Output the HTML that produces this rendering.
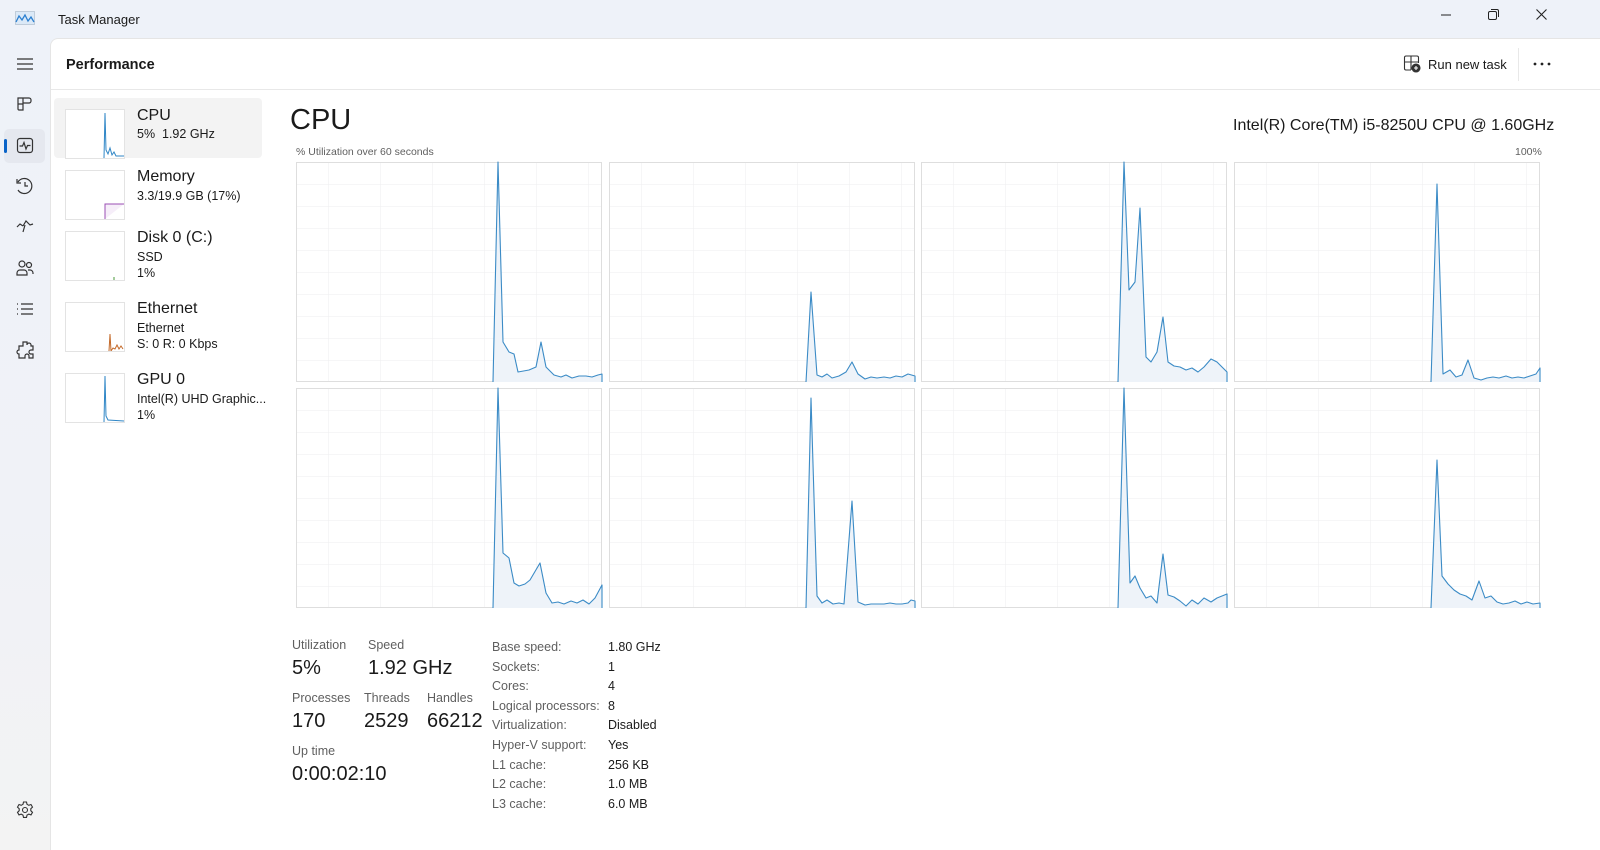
<!DOCTYPE html>
<html><head><meta charset="utf-8"><style>
*{margin:0;padding:0;box-sizing:border-box}
body{width:1600px;height:850px;overflow:hidden;font-family:"Liberation Sans",sans-serif;background:linear-gradient(#eef2f9 0%,#f0f2f7 60%,#f3f3f3 100%);position:relative;color:#1a1a1a}
.abs{position:absolute}
.main{position:absolute;left:50px;top:38px;width:1550px;height:812px;background:#fff;border-top-left-radius:8px;border-left:1px solid #e5e5e5;border-top:1px solid #e5e5e5}
.t{position:absolute;white-space:nowrap}
.lbl{color:#5f5f5f;font-size:12.5px}
.big{font-size:20px;color:#1a1a1a}
.kv{font-size:12.5px}
.mini{position:absolute;left:65px;width:60px;height:50px;border:1px solid #e3e3e3;background:#fff}
</style></head><body>
<svg class="abs" style="left:15px;top:11px" width="20" height="14" viewBox="0 0 20 14"><rect x="0.5" y="0.5" width="19" height="13" fill="#dbe9f7" stroke="#9ab" stroke-width="0.5"/><polyline points="1,11 4,5 7,9 10,4 13,10 16,6 19,11" fill="none" stroke="#2a7fd0" stroke-width="1.3"/></svg>
<div class="t" style="left:58px;top:12px;font-size:13px">Task Manager</div>
<svg class="abs" style="left:1440px;top:9px" width="12" height="12"><line x1="1" y1="6" x2="11" y2="6" stroke="#222" stroke-width="1"/></svg>
<svg class="abs" style="left:1487px;top:8px" width="13" height="13"><rect x="1.5" y="3.5" width="8" height="8" rx="1.5" fill="none" stroke="#222"/><path d="M4 1.5h6a1.5 1.5 0 0 1 1.5 1.5v6" fill="none" stroke="#222"/></svg>
<svg class="abs" style="left:1535px;top:8px" width="13" height="13"><path d="M1.5 1.5l10 10M11.5 1.5l-10 10" stroke="#222" stroke-width="1.1"/></svg>

<svg class="abs" style="left:16px;top:57px" width="18" height="14"><path d="M1 2h16M1 7h16M1 12h16" stroke="#333" stroke-width="1.2"/></svg>
<svg class="abs" style="left:16px;top:96px" width="18" height="16" fill="none" stroke="#333" stroke-width="1.2"><path d="M2 2h5v12H3a1 1 0 0 1-1-1zM7 2h6a2 2 0 0 1 2 2v1a2 2 0 0 1-2 2H7M2 8h5"/></svg>
<div class="abs" style="left:4px;top:129px;width:41px;height:34px;background:#e5e8ef;border-radius:5px"></div>
<div class="abs" style="left:4px;top:139px;width:3px;height:14px;background:#0a64c8;border-radius:2px"></div>
<svg class="abs" style="left:16px;top:137px" width="18" height="17" fill="none" stroke="#333" stroke-width="1.2"><rect x="1.5" y="1.5" width="15" height="14" rx="2.5"/><polyline points="3.5,9 6.5,9 8,5.5 10,12 11.5,8.5 14.5,8.5"/></svg>
<svg class="abs" style="left:15px;top:177px" width="20" height="18" fill="none" stroke="#333" stroke-width="1.2"><path d="M3 5A7.5 7.5 0 1 1 3 13"/><path d="M2 2v4h4"/><path d="M10 5v4h3"/></svg>
<svg class="abs" style="left:15px;top:219px" width="20" height="14" fill="none" stroke="#333" stroke-width="1.2"><path d="M2 8l3-3 3 2M8 7l3-5 4 4 3-1M10 6l-2 7"/></svg>
<svg class="abs" style="left:15px;top:259px" width="20" height="18" fill="none" stroke="#333" stroke-width="1.2"><circle cx="7" cy="5" r="3"/><circle cx="14" cy="6" r="2.5"/><path d="M2 16v-2a3 3 0 0 1 3-3h4a3 3 0 0 1 3 3v2zM13 11h2a3 3 0 0 1 3 3v1"/></svg>
<svg class="abs" style="left:15px;top:302px" width="20" height="14" stroke="#333" stroke-width="1.2"><path d="M2 2h1M2 7h1M2 12h1M6 2h12M6 7h12M6 12h12"/></svg>
<svg class="abs" style="left:15px;top:340px" width="20" height="20" fill="none" stroke="#333" stroke-width="1.2"><path d="M8 2h4v3a2 2 0 0 1 4 0v1h2v4h-2a2 2 0 0 0 0 4h2v4h-4v-2a2 2 0 0 0-4 0v2H4v-4a2 2 0 0 1 0-4V6h4z"/></svg>
<svg class="abs" style="left:15px;top:800px" width="20" height="20" fill="none" stroke="#333" stroke-width="1.1"><circle cx="10" cy="10" r="2.5"/><path d="M8.5 2h3l.5 2.3 1.8 1 2.2-.8 1.5 2.6-1.7 1.6v2l1.7 1.6-1.5 2.6-2.2-.8-1.8 1-.5 2.3h-3l-.5-2.3-1.8-1-2.2.8-1.5-2.6 1.7-1.6v-2L2.5 7.1 4 4.5l2.2.8 1.8-1z"/></svg>

<div class="main"></div>
<div class="abs" style="left:51px;top:89px;width:1549px;height:1px;background:#e8e8e8"></div>
<div class="t" style="left:66px;top:57px;font-size:14.5px;font-weight:bold;color:#1a1a1a">Performance</div>
<svg class="abs" style="left:1403px;top:55px" width="18" height="18" fill="none" stroke="#333" stroke-width="1.1"><path d="M8 15H3a1.5 1.5 0 0 1-1.5-1.5v-11A1.5 1.5 0 0 1 3 1h11a1.5 1.5 0 0 1 1.5 1.5V8M1.5 7h14M8 1v14"/><circle cx="13" cy="13" r="4" fill="#333"/><path d="M13 11v4M11 13h4" stroke="#fff"/></svg>
<div class="t" style="left:1428px;top:57px;font-size:13px">Run new task</div>
<div class="abs" style="left:1518px;top:48px;width:1px;height:33px;background:#e8e8e8"></div>
<svg class="abs" style="left:1533px;top:62px" width="18" height="4" fill="#222"><circle cx="2" cy="2" r="1.4"/><circle cx="9" cy="2" r="1.4"/><circle cx="16" cy="2" r="1.4"/></svg>

<div class="abs" style="left:54px;top:98px;width:208px;height:60px;background:#f3f3f3;border-radius:4px"></div>
<div class="mini" style="top:109px"><svg width="58" height="48"><polyline points="38,48 39,3 40,40 42,44 44,38 46,45 48,42 50,46 58,46" fill="none" stroke="#2f86c6" stroke-width="1"/></svg></div>
<div class="t" style="left:137px;top:107px;font-size:16px">CPU</div>
<div class="t" style="left:137px;top:127px;font-size:12.5px">5%&nbsp; 1.92 GHz</div>
<div class="mini" style="top:170px"><svg width="58" height="48"><polyline points="39,48 39,33 58,33" fill="#f6eef9" stroke="#9b4fb4" stroke-width="1"/></svg></div>
<div class="t" style="left:137px;top:168px;font-size:16px">Memory</div>
<div class="t" style="left:137px;top:189px;font-size:12.5px">3.3/19.9 GB (17%)</div>
<div class="mini" style="top:231px"><svg width="58" height="48"><line x1="48" y1="48" x2="48" y2="45" stroke="#4a9a3a"/></svg></div>
<div class="t" style="left:137px;top:229px;font-size:16px">Disk 0 (C:)</div>
<div class="t" style="left:137px;top:250px;font-size:12.5px">SSD</div>
<div class="t" style="left:137px;top:266px;font-size:12.5px">1%</div>
<div class="mini" style="top:302px"><svg width="58" height="48"><polyline points="43,48 44,31 45,48 47,45 49,46 51,42 53,46 55,43 57,46" fill="none" stroke="#c46a2a" stroke-width="1"/></svg></div>
<div class="t" style="left:137px;top:300px;font-size:16px">Ethernet</div>
<div class="t" style="left:137px;top:321px;font-size:12.5px">Ethernet</div>
<div class="t" style="left:137px;top:337px;font-size:12.5px">S: 0 R: 0 Kbps</div>
<div class="mini" style="top:373px"><svg width="58" height="48"><polyline points="38,48 39,2 40,42 42,46 58,47" fill="none" stroke="#2f86c6" stroke-width="1"/></svg></div>
<div class="t" style="left:137px;top:371px;font-size:16px">GPU 0</div>
<div class="t" style="left:137px;top:392px;font-size:12.5px">Intel(R) UHD Graphic...</div>
<div class="t" style="left:137px;top:408px;font-size:12.5px">1%</div>

<div class="t" style="left:290px;top:104px;font-size:29px">CPU</div>
<div class="t" style="left:1233px;top:117px;font-size:16px">Intel(R) Core(TM) i5-8250U CPU @ 1.60GHz</div>
<div class="t lbl" style="left:296px;top:146px;font-size:10.5px">% Utilization over 60 seconds</div>
<div class="t lbl" style="left:1515px;top:146px;font-size:10.5px">100%</div>

<svg class="abs" style="left:0;top:0" width="1600" height="850">
<defs>
<pattern id="g" x="0" y="0" width="52" height="22" patternUnits="userSpaceOnUse" patternTransform="translate(32 0)">
<path d="M0 0V22M0 0H52" fill="none" stroke="#ededef" stroke-width="1"/></pattern>
<g id="grid"><rect x="0" y="0" width="306" height="220" fill="#fff" stroke="none"/><rect x="0" y="0" width="306" height="220" fill="url(#g)" stroke="none"/><rect x="0.5" y="0.5" width="305" height="219" fill="none" stroke="#dedede" stroke-width="1"/></g>
</defs>
<use href="#grid" x="296" y="162"/><use href="#grid" x="609" y="162"/><use href="#grid" x="921" y="162"/><use href="#grid" x="1234" y="162"/>
<use href="#grid" x="296" y="388"/><use href="#grid" x="609" y="388"/><use href="#grid" x="921" y="388"/><use href="#grid" x="1234" y="388"/>
<g fill="#eef3f9" stroke="#3b8bc6" stroke-width="1.1" stroke-linejoin="round">
<g transform="translate(296 162)"><polyline points="197,220 202,0 207,180 213,190 218,192 222,210 233,208 240,205 245,180 250,205 258,213 265,215 270,213 276,216 283,214 290,214 296,215 302,213 306,212 306,220"/></g>
<g transform="translate(609 162)"><polyline points="197,220 202,130 208,213 213,215 218,212 223,216 230,214 237,210 243,200 249,212 256,217 262,215 268,216 275,215 281,216 287,214 293,215 299,212 306,214 306,220"/></g>
<g transform="translate(921 162)"><polyline points="197,220 203,0 208,128 214,120 219,46 225,195 230,200 236,190 242,155 247,200 253,204 259,205 265,208 271,206 277,210 283,205 290,197 296,200 306,210 306,220"/></g>
<g transform="translate(1234 162)"><polyline points="197,220 203,22 209,212 216,208 222,215 228,213 234,198 240,216 247,218 253,216 259,215 265,216 272,214 278,216 284,215 290,216 296,214 302,212 306,206 306,220"/></g>
<g transform="translate(296 388)"><polyline points="197,220 202,0 207,165 213,170 218,195 223,198 229,196 234,192 244,175 250,205 256,215 262,214 268,216 275,213 281,215 287,212 293,216 299,210 306,197 306,220"/></g>
<g transform="translate(609 388)"><polyline points="197,220 202,10 208,208 213,215 218,212 224,216 230,215 235,216 243,113 249,214 256,217 262,216 268,216 275,216 281,215 287,216 293,216 299,215 302,212 306,213 306,220"/></g>
<g transform="translate(921 388)"><polyline points="197,220 203,0 209,195 214,188 219,200 225,210 230,208 236,215 242,166 247,207 253,209 259,213 265,218 271,212 277,216 283,210 290,214 296,210 306,206 306,220"/></g>
<g transform="translate(1234 388)"><polyline points="197,220 203,72 208,188 214,196 220,202 226,206 232,208 238,212 245,193 251,210 257,208 263,214 269,216 275,215 281,213 287,216 293,214 299,216 306,215 306,220"/></g>
</g>
</svg>

<div class="t lbl" style="left:292px;top:638px">Utilization</div>
<div class="t lbl" style="left:368px;top:638px">Speed</div>
<div class="t big" style="left:292px;top:657px">5%</div>
<div class="t big" style="left:368px;top:657px">1.92 GHz</div>
<div class="t lbl" style="left:292px;top:691px">Processes</div>
<div class="t lbl" style="left:364px;top:691px">Threads</div>
<div class="t lbl" style="left:427px;top:691px">Handles</div>
<div class="t big" style="left:292px;top:710px">170</div>
<div class="t big" style="left:364px;top:710px">2529</div>
<div class="t big" style="left:427px;top:710px">66212</div>
<div class="t lbl" style="left:292px;top:744px">Up time</div>
<div class="t big" style="left:292px;top:763px">0:00:02:10</div>

<div class="t lbl" style="left:492px;top:638px;line-height:19.6px">Base speed:<br>Sockets:<br>Cores:<br>Logical processors:<br>Virtualization:<br>Hyper-V support:<br>L1 cache:<br>L2 cache:<br>L3 cache:</div>
<div class="t kv" style="left:608px;top:638px;line-height:19.6px">1.80 GHz<br>1<br>4<br>8<br>Disabled<br>Yes<br>256 KB<br>1.0 MB<br>6.0 MB</div>
</body></html>
